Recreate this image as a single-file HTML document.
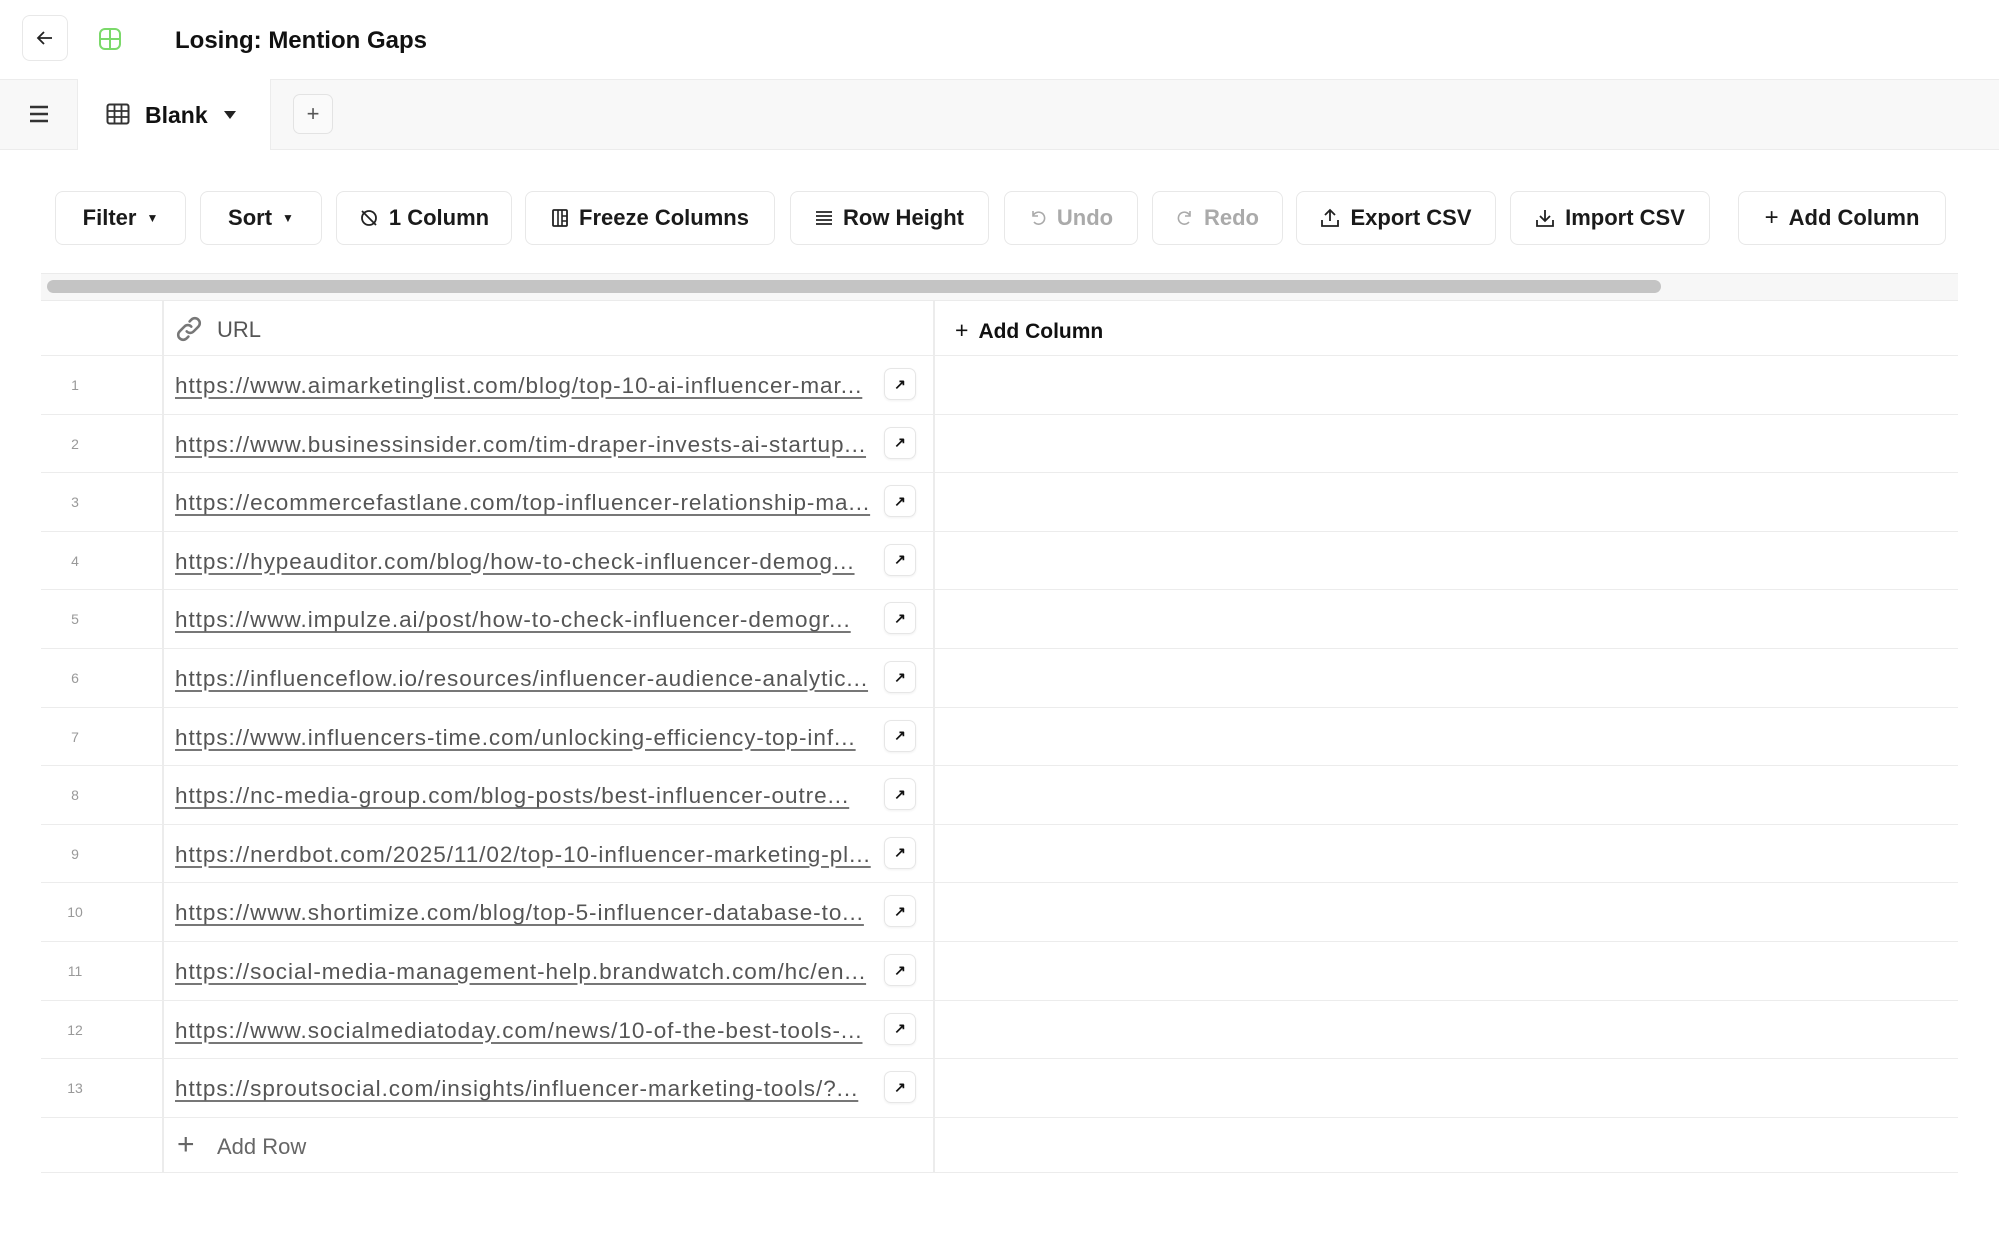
<!DOCTYPE html>
<html><head><meta charset="utf-8"><style>
*{box-sizing:border-box;margin:0;padding:0}
body{width:1999px;height:1246px;background:#fff;font-family:"Liberation Sans",sans-serif;color:#111;position:relative;overflow:hidden}
.a{position:absolute}
.btn{position:absolute;top:191px;height:54px;border:1.5px solid #e8e8e8;border-radius:8px;background:#fff;display:flex;align-items:center;justify-content:center;font-size:22px;font-weight:700;color:#1a1a1a;gap:10px}
.dis{color:#aaa}
.row{position:absolute;left:41px;width:1917px;height:58.6px;border-bottom:1.5px solid #ececec}
.num{position:absolute;left:0;width:68px;text-align:center;top:21px;font-size:14px;color:#999}
.url{position:absolute;left:134px;top:17px;width:700px;font-size:22.5px;letter-spacing:0.95px;color:#555;text-decoration:underline;text-decoration-color:#777;text-underline-offset:4px;white-space:nowrap;overflow:hidden}
.open{position:absolute;left:843px;top:12px;width:32px;height:32px;border:1.5px solid #e6e6e6;border-radius:7px;font-size:14px;display:flex;align-items:center;justify-content:center;font-weight:700;box-shadow:0 1px 2px rgba(0,0,0,.06)}
.vl{position:absolute;top:0;bottom:0;width:1.5px;background:#ececec}
</style></head><body>
<div class="a" style="left:22px;top:15px;width:46px;height:46px;border:1.5px solid #e8e8e8;border-radius:8px;display:flex;align-items:center;justify-content:center">
<svg width="20" height="20" viewBox="0 0 20 20"><path d="M17 10H3M9 4L3 10l6 6" fill="none" stroke="#222" stroke-width="1.8"/></svg></div>
<svg class="a" style="left:98px;top:27px" width="24" height="24" viewBox="0 0 24 24"><rect x="2" y="2" width="20" height="20" rx="5" fill="none" stroke="#7bd96a" stroke-width="2"/><path d="M12 2v20M2 12h20" stroke="#7bd96a" stroke-width="2"/></svg>
<div class="a" style="left:175px;top:27px;font-size:24px;font-weight:700">Losing: Mention Gaps</div>
<div class="a" style="left:0;top:79px;width:1999px;height:71px;background:#f8f8f8;border-top:1.5px solid #ececec;border-bottom:1.5px solid #ececec"></div>
<svg class="a" style="left:28px;top:104px" width="22" height="20" viewBox="0 0 22 20"><path d="M2 3h18M2 10h18M2 17h18" stroke="#333" stroke-width="2.4"/></svg>
<div class="a" style="left:77px;top:79px;width:194px;height:71px;background:#fff;border-left:1.5px solid #ececec;border-right:1.5px solid #ececec"></div>
<svg class="a" style="left:106px;top:103px" width="24" height="22" viewBox="0 0 24 22"><rect x="1.5" y="1.5" width="21" height="19" rx="2" fill="none" stroke="#333" stroke-width="2"/><path d="M1.5 8h21M1.5 14h21M8.5 1.5v19M15.5 1.5v19" stroke="#333" stroke-width="1.8"/></svg>
<div class="a" style="left:145px;top:102px;font-size:23px;font-weight:700">Blank</div>
<div class="a" style="left:224px;top:111px;width:0;height:0;border-left:6px solid transparent;border-right:6px solid transparent;border-top:8px solid #222"></div>
<div class="a" style="left:293px;top:94px;width:40px;height:40px;border:1.5px solid #e3e3e3;border-radius:7px;background:#fafafa;display:flex;align-items:center;justify-content:center;font-size:22px;color:#555">+</div>
<div class="btn" style="left:55px;width:131px">Filter <span style="font-size:12px">▼</span></div>
<div class="btn" style="left:200px;width:122px">Sort <span style="font-size:12px">▼</span></div>
<div class="btn" style="left:336px;width:176px"><svg width="20" height="20" viewBox="0 0 20 20"><circle cx="10" cy="10" r="7" fill="none" stroke="#222" stroke-width="1.8"/><path d="M3 3l14 14" stroke="#222" stroke-width="1.8"/></svg>1 Column</div>
<div class="btn" style="left:525px;width:250px"><svg width="18" height="20" viewBox="0 0 18 20"><rect x="2" y="2" width="14" height="16" rx="1" fill="none" stroke="#222" stroke-width="1.8"/><path d="M7 2v16M11 2v16M11 8h5M11 13h5" stroke="#222" stroke-width="1.6"/></svg>Freeze Columns</div>
<div class="btn" style="left:790px;width:199px"><svg width="18" height="16" viewBox="0 0 18 16"><path d="M1 2h16M1 6h16M1 10h16M1 14h16" stroke="#222" stroke-width="1.8"/></svg>Row Height</div>
<div class="btn dis" style="left:1004px;width:134px"><svg width="18" height="18" viewBox="0 0 18 18"><path d="M4 2v5h5M4 7a6 6 0 1 1 1 6" fill="none" stroke="#aaa" stroke-width="1.6"/></svg>Undo</div>
<div class="btn dis" style="left:1152px;width:131px"><svg width="18" height="18" viewBox="0 0 18 18"><path d="M14 2v5H9M14 7a6 6 0 1 0 -1 6" fill="none" stroke="#aaa" stroke-width="1.6"/></svg>Redo</div>
<div class="btn" style="left:1296px;width:200px"><svg width="20" height="20" viewBox="0 0 20 20"><path d="M10 13V2M5 7l5-5 5 5M2 12v6h16v-6" fill="none" stroke="#222" stroke-width="1.8"/></svg>Export CSV</div>
<div class="btn" style="left:1510px;width:200px"><svg width="20" height="20" viewBox="0 0 20 20"><path d="M10 2v11M5 8l5 5 5-5M2 12v6h16v-6" fill="none" stroke="#222" stroke-width="1.8"/></svg>Import CSV</div>
<div class="btn" style="left:1738px;width:208px"><span style="font-weight:400;font-size:24px">+</span>Add Column</div>
<div class="a" style="left:41px;top:273px;width:1917px;height:28px;background:#f7f7f7;border-top:1.5px solid #ebebeb;border-bottom:1.5px solid #ebebeb"></div>
<div class="a" style="left:47px;top:280px;width:1614px;height:13px;background:#c4c4c4;border-radius:7px"></div>
<div class="a" style="left:41px;top:301px;width:1917px;height:871px">
<div class="vl" style="left:121px"></div><div class="vl" style="left:892px"></div>
</div>
<div class="row" style="top:301px;height:55px">
<svg class="a" style="left:134px;top:14px" width="28" height="28" viewBox="0 0 24 24"><path d="M10 14a4 4 0 0 0 6 0l4-4a4 4 0 0 0-6-6l-1.5 1.5M14 10a4 4 0 0 0-6 0l-4 4a4 4 0 0 0 6 6l1.5-1.5" fill="none" stroke="#777" stroke-width="2.2" stroke-linecap="round"/></svg>
<div class="a" style="left:176px;top:16px;font-size:22px;color:#555">URL</div>
<div class="a" style="left:914px;top:16px;font-size:21px;font-weight:700"><span style="font-weight:400;font-size:23px;margin-right:10px">+</span>Add Column</div>
</div>
<div class="row" style="top:356px"><div class="num">1</div><div class="url">https://www.aimarketinglist.com/blog/top-10-ai-influencer-mar...</div><div class="open">↗</div></div>
<div class="row" style="top:414.6px"><div class="num">2</div><div class="url">https://www.businessinsider.com/tim-draper-invests-ai-startup...</div><div class="open">↗</div></div>
<div class="row" style="top:473.2px"><div class="num">3</div><div class="url">https://ecommercefastlane.com/top-influencer-relationship-ma...</div><div class="open">↗</div></div>
<div class="row" style="top:531.8px"><div class="num">4</div><div class="url">https://hypeauditor.com/blog/how-to-check-influencer-demog...</div><div class="open">↗</div></div>
<div class="row" style="top:590.4px"><div class="num">5</div><div class="url">https://www.impulze.ai/post/how-to-check-influencer-demogr...</div><div class="open">↗</div></div>
<div class="row" style="top:649px"><div class="num">6</div><div class="url">https://influenceflow.io/resources/influencer-audience-analytic...</div><div class="open">↗</div></div>
<div class="row" style="top:707.6px"><div class="num">7</div><div class="url">https://www.influencers-time.com/unlocking-efficiency-top-inf...</div><div class="open">↗</div></div>
<div class="row" style="top:766.2px"><div class="num">8</div><div class="url">https://nc-media-group.com/blog-posts/best-influencer-outre...</div><div class="open">↗</div></div>
<div class="row" style="top:824.8px"><div class="num">9</div><div class="url">https://nerdbot.com/2025/11/02/top-10-influencer-marketing-pl...</div><div class="open">↗</div></div>
<div class="row" style="top:883.4px"><div class="num">10</div><div class="url">https://www.shortimize.com/blog/top-5-influencer-database-to...</div><div class="open">↗</div></div>
<div class="row" style="top:942px"><div class="num">11</div><div class="url">https://social-media-management-help.brandwatch.com/hc/en...</div><div class="open">↗</div></div>
<div class="row" style="top:1000.6px"><div class="num">12</div><div class="url">https://www.socialmediatoday.com/news/10-of-the-best-tools-...</div><div class="open">↗</div></div>
<div class="row" style="top:1059.2px"><div class="num">13</div><div class="url">https://sproutsocial.com/insights/influencer-marketing-tools/?...</div><div class="open">↗</div></div>
<div class="row" style="top:1117.8px;height:55px">
<div class="a" style="left:136px;top:10px;font-size:30px;color:#666;font-weight:300">+</div>
<div class="a" style="left:176px;top:16px;font-size:22px;color:#666">Add Row</div>
</div>
</body></html>
